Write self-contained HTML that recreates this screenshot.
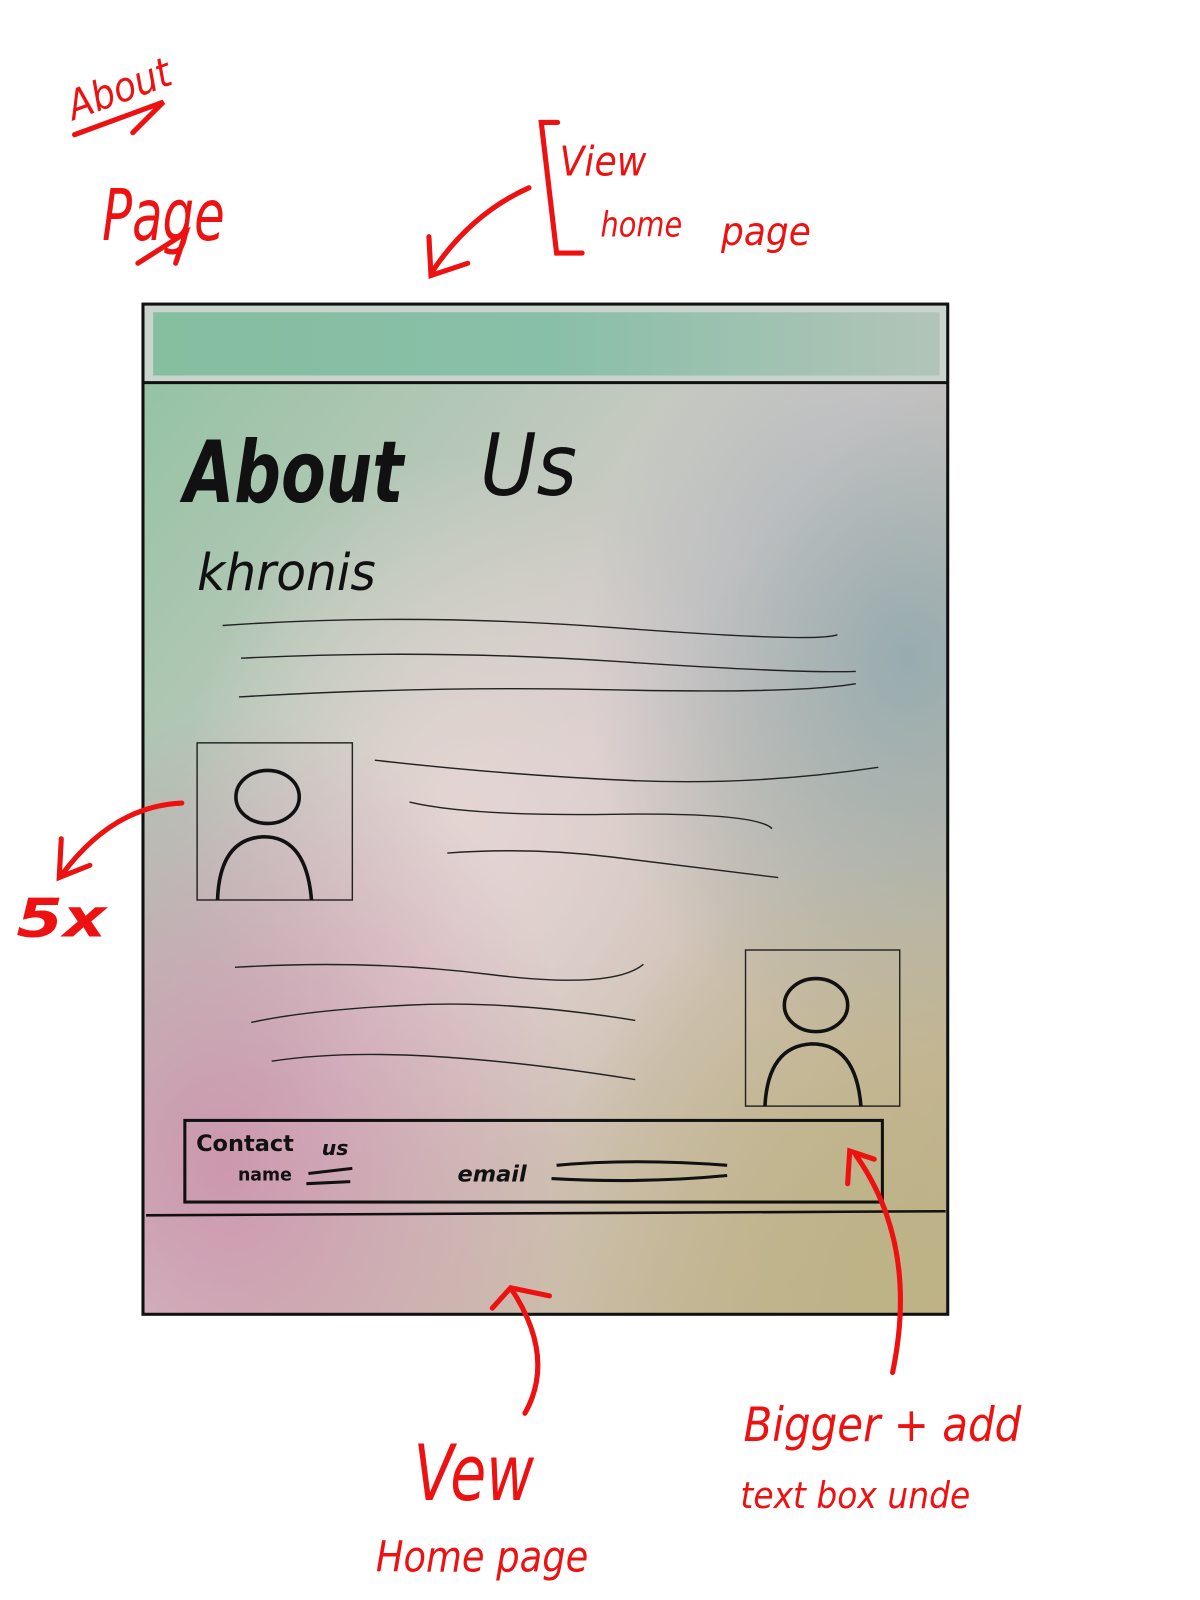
<!DOCTYPE html>
<html><head><meta charset="utf-8"><style>
html,body{margin:0;padding:0;background:#fff;width:1200px;height:1600px;overflow:hidden}
svg{display:block}
</style></head><body>
<svg width="1200" height="1600" viewBox="0 0 1175 1568" preserveAspectRatio="none" xmlns="http://www.w3.org/2000/svg">
<defs>
<linearGradient id="base" x1="0" y1="0" x2="1" y2="1">
<stop offset="0" stop-color="#8fc2a0"/><stop offset="0.5" stop-color="#d8cccc"/><stop offset="1" stop-color="#bfb088"/>
</linearGradient>
<radialGradient id="r1" cx="0.1" cy="0.85" r="0.45"><stop offset="0" stop-color="#c98aa6" stop-opacity="0.8"/><stop offset="1" stop-color="#c98aa6" stop-opacity="0"/></radialGradient>
<radialGradient id="r2" cx="0.95" cy="0.35" r="0.4"><stop offset="0" stop-color="#91a9ae" stop-opacity="0.9"/><stop offset="1" stop-color="#91a9ae" stop-opacity="0"/></radialGradient>
<radialGradient id="r3" cx="0.4" cy="0.5" r="0.35"><stop offset="0" stop-color="#e6d6d4" stop-opacity="0.9"/><stop offset="1" stop-color="#e6d6d4" stop-opacity="0"/></radialGradient>
<radialGradient id="r4" cx="0.9" cy="0.95" r="0.4"><stop offset="0" stop-color="#bdb285" stop-opacity="0.9"/><stop offset="1" stop-color="#bdb285" stop-opacity="0"/></radialGradient>
<linearGradient id="hdr" x1="0" y1="0" x2="1" y2="0"><stop offset="0" stop-color="#86bea0"/><stop offset="0.5" stop-color="#88bfa8"/><stop offset="1" stop-color="#b2c4b8"/></linearGradient>
</defs>
<rect x="140" y="298" width="788" height="990" fill="url(#base)"/>
<rect x="140" y="298" width="788" height="990" fill="url(#r3)"/>
<rect x="140" y="298" width="788" height="990" fill="url(#r2)"/>
<rect x="140" y="298" width="788" height="990" fill="url(#r1)"/>
<rect x="140" y="298" width="788" height="990" fill="url(#r4)"/>
<rect x="140" y="298" width="788" height="77" fill="#c8d4cc"/>
<rect x="150" y="306" width="770" height="62" fill="url(#hdr)"/>
<g fill="none" stroke="#111" stroke-width="3">
<rect x="140" y="298" width="788" height="990"/>
<line x1="140" y1="375" x2="928" y2="375"/>
<line x1="143" y1="1191" x2="926" y2="1187" stroke-width="2.5"/>
<rect x="181" y="1098" width="683" height="80" stroke-width="3"/>
</g>
<g fill="none" stroke="#222" stroke-width="1.4">
<path d="M218 613 Q400 600 600 615 T820 622"/>
<path d="M236 645 Q420 636 600 648 T838 658"/>
<path d="M234 683 Q420 672 600 676 T838 670"/>
<path d="M367 745 Q500 760 620 765 T860 752"/>
<path d="M401 786 Q460 800 600 798 T756 812"/>
<path d="M438 836 Q520 830 600 840 T762 860"/>
<path d="M230 948 Q360 940 480 955 T630 945"/>
<path d="M246 1002 Q300 990 400 985 T622 1000"/>
<path d="M266 1040 Q330 1030 420 1035 T622 1058"/>
<rect x="193" y="728" width="152" height="154"/>
<rect x="730" y="931" width="151" height="153"/>
</g>
<g fill="none" stroke="#111" stroke-width="3.5">
<ellipse cx="262" cy="781" rx="31" ry="26"/>
<path d="M213 882 Q215 822 258 820 Q300 820 305 882"/>
<ellipse cx="799" cy="985" rx="31" ry="26"/>
<path d="M749 1084 Q752 1025 795 1023 Q838 1023 843 1084"/>
<path d="M302 1150 L345 1145 M300 1160 L343 1158" stroke-width="3"/>
<path d="M545 1142 Q620 1135 712 1142 M540 1155 Q630 1160 712 1152" stroke-width="3"/>
</g>
<g font-family="'DejaVu Sans', sans-serif" fill="#111">
<text x="180" y="492" font-size="84" font-weight="bold" font-style="italic" textLength="215" lengthAdjust="spacingAndGlyphs">About</text>
<text x="470" y="485" font-size="84" font-style="italic" textLength="95" lengthAdjust="spacingAndGlyphs">Us</text>
<text x="193" y="578" font-size="50" font-style="italic" textLength="175" lengthAdjust="spacingAndGlyphs">khronis</text>
<text x="192" y="1128" font-size="22" font-weight="bold">Contact</text>
<text x="315" y="1132" font-size="20" font-weight="bold" font-style="italic">us</text>
<text x="233" y="1157" font-size="17" font-weight="bold">name</text>
<text x="448" y="1158" font-size="22" font-weight="bold" font-style="italic">email</text>
</g>
<g font-family="'DejaVu Sans', sans-serif" fill="#ee1111" font-style="italic">
<text x="72" y="118" font-size="40" transform="rotate(-20 72 118)" textLength="105" lengthAdjust="spacingAndGlyphs">About</text>
<text x="100" y="235" font-size="70" textLength="120" lengthAdjust="spacingAndGlyphs">Page</text>
<text x="548" y="172" font-size="40" textLength="85" lengthAdjust="spacingAndGlyphs">View</text>
<text x="588" y="232" font-size="34" textLength="80" lengthAdjust="spacingAndGlyphs">home</text>
<text x="706" y="240" font-size="38" textLength="88" lengthAdjust="spacingAndGlyphs">page</text>
<text x="16" y="918" font-size="52" font-weight="bold" textLength="88" lengthAdjust="spacingAndGlyphs">5x</text>
<text x="405" y="1470" font-size="76" textLength="118" lengthAdjust="spacingAndGlyphs">Vew</text>
<text x="368" y="1540" font-size="42" textLength="208" lengthAdjust="spacingAndGlyphs">Home page</text>
<text x="728" y="1412" font-size="46" textLength="272" lengthAdjust="spacingAndGlyphs">Bigger + add</text>
<text x="725" y="1478" font-size="36" textLength="225" lengthAdjust="spacingAndGlyphs">text box unde</text>
</g>
<g fill="none" stroke="#ee1111" stroke-width="5" stroke-linecap="round">
<path d="M73 132 L160 100 L130 130"/>
<path d="M135 258 L182 228 L172 258"/>
<path d="M546 120 L530 120 L545 248 L570 248"/>
<path d="M518 184 Q460 210 422 268 M420 232 L422 270 L458 258"/>
<path d="M178 787 Q110 790 60 858 M60 822 L58 860 L88 848"/>
<path d="M514 1385 Q545 1330 500 1262 M482 1282 L500 1262 L538 1270"/>
<path d="M874 1345 Q900 1220 838 1132 M830 1160 L832 1128 L856 1136"/>
</g>
</svg>
</body></html>
